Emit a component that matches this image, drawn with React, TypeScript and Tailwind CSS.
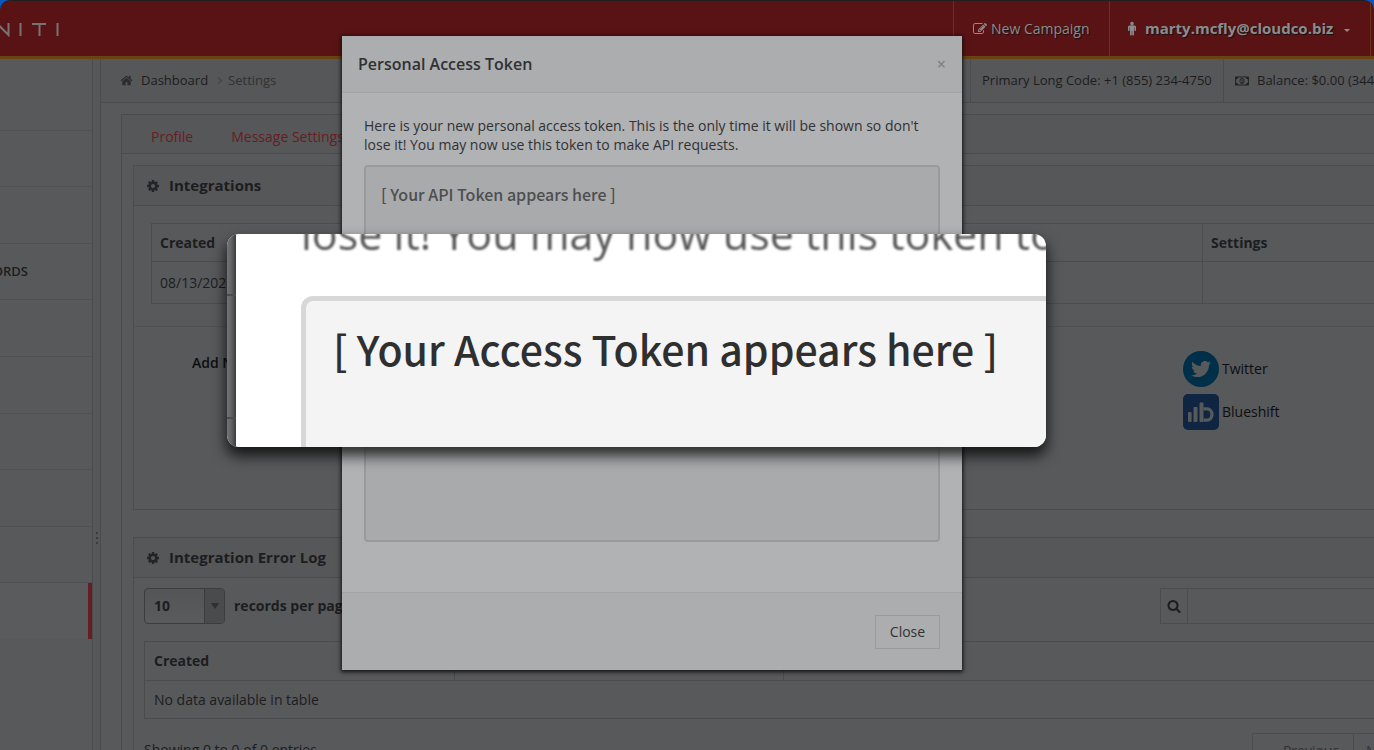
import type { ReactNode } from 'react';
import { FaTwitter } from 'react-icons/fa';

interface IconProps {
  d: string;
  viewBox?: string;
  className?: string;
}

const ICONS = {
  cog: 'M1152 896q0-106-75-181t-181-75-181 75-75 181 75 181 181 75 181-75 75-181zm512-109v222q0 12-8 23t-20 13l-185 28q-19 54-39 91 35 50 107 138 10 12 10 25t-9 23q-27 37-99 108t-94 71q-12 0-26-9l-138-108q-44 23-91 38-16 136-29 186-7 28-36 28h-222q-14 0-24.5-8.5t-11.5-21.5l-28-184q-49-16-90-37l-141 107q-10 9-25 9-14 0-25-11-126-114-165-168-7-10-7-23 0-12 8-23 15-21 51-66.5t54-70.5q-27-50-41-99l-183-27q-13-2-21-12.5t-8-23.5v-222q0-12 8-23t19-13l186-28q14-46 39-92-40-57-107-138-10-12-10-24 0-10 9-23 26-36 98.5-107.5t94.5-71.5q13 0 26 10l138 107q44-23 91-38 16-136 29-186 7-28 36-28h222q14 0 24.5 8.5t11.5 21.5l28 184q49 16 90 37l142-107q9-9 24-9 13 0 25 10 129 119 165 170 7 8 7 22 0 12-8 23-15 21-51 66.5t-54 70.5q26 50 41 98l183 28q13 2 21 12.5t8 23.5z',
  home: 'M1472 992v480q0 26-19 45t-45 19h-384v-384h-256v384h-384q-26 0-45-19t-19-45v-480q0-1 .5-3t.5-3l575-474 575 474q1 2 1 6zm223-69l-62 74q-8 9-21 11h-3q-13 0-21-7l-692-577-692 577q-12 8-24 7-13-2-21-11l-62-74q-8-10-7-23.5t11-21.5l719-599q32-26 76-26t76 26l244 204v-195q0-14 9-23t23-9h192q14 0 23 9t9 23v408l219 182q10 8 11 21.5t-7 23.5z',
  male: 'M1280 704v416q0 40-28 68t-68 28-68-28-28-68v-352h-64v912q0 46-33 79t-79 33-79-33-33-79v-464h-64v464q0 46-33 79t-79 33-79-33-33-79v-912h-64v352q0 40-28 68t-68 28-68-28-28-68v-416q0-80 56-136t136-56h640q80 0 136 56t56 136zm-288-448q0 93-65.5 158.5t-158.5 65.5-158.5-65.5-65.5-158.5 65.5-158.5 158.5-65.5 158.5 65.5 65.5 158.5z',
  edit: 'M888 1184l116-116-152-152-116 116v56h96v96h56zm440-720q-16-16-33 1l-350 350q-17 17-1 33t33-1l350-350q17-17 1-33zm80 594v190q0 119-84.5 203.5t-203.5 84.5h-832q-119 0-203.5-84.5t-84.5-203.5v-832q0-119 84.5-203.5t203.5-84.5h832q63 0 117 25 15 7 18 23 3 17-9 29l-49 49q-14 14-32 8-23-6-45-6h-832q-66 0-113 47t-47 113v832q0 66 47 113t113 47h832q66 0 113-47t47-113v-126q0-13 9-22l64-64q15-15 35-7t20 29zm-96-738l288 288-672 672h-288v-288zm444 132l-92 92-288-288 92-92q28-28 68-28t68 28l152 152q28 28 28 68t-28 68z',
  search: 'M1216 832q0-185-131.5-316.5t-316.5-131.5-316.5 131.5-131.5 316.5 131.5 316.5 316.5 131.5 316.5-131.5 131.5-316.5zm512 832q0 52-38 90t-90 38q-54 0-90-38l-343-342q-179 124-399 124-143 0-273.5-55.5t-225-150-150-225-55.5-273.5 55.5-273.5 150-225 225-150 273.5-55.5 273.5 55.5 225 150 150 225 55.5 273.5q0 220-124 399l343 343q37 37 37 90z',
};

function Icon({ d, viewBox = '0 0 1792 1792', className }: IconProps) {
  return (
    <svg viewBox={viewBox} fill="currentColor" aria-hidden="true" className={className}>
      <path d={d} />
    </svg>
  );
}

function MoneyIcon() {
  return (
    <svg viewBox="0 0 15 10" aria-hidden="true" className="h-[10px] w-[14px]" fill="none" stroke="currentColor">
      <rect x="0.7" y="0.7" width="13.6" height="8.6" strokeWidth="1" />
      <path d="M1 3.2A2.3 2.3 0 0 0 3.3 1H1zM14 3.2A2.3 2.3 0 0 1 11.7 1H14zM1 6.8A2.3 2.3 0 0 1 3.3 9H1zM14 6.8A2.3 2.3 0 0 0 11.7 9H14z" fill="currentColor" stroke="none" />
      <ellipse cx="7.5" cy="5" rx="2.3" ry="2.8" strokeWidth="0.9" />
      <path d="M6.8 4.1l.9-.6v2.9M6.7 6.5h1.9" strokeWidth="0.7" />
    </svg>
  );
}

function BlueshiftIcon() {
  return (
    <svg viewBox="0 0 36 36" aria-hidden="true" className="size-9">
      <rect width="36" height="36" rx="5" fill="#0f2541" />
      <g fill="#58595b">
        <rect x="5" y="18" width="3.6" height="10" rx="1" />
        <rect x="10.5" y="13" width="4" height="15" rx="1" />
        <rect x="16.5" y="8.5" width="4" height="19.5" rx="1" />
      </g>
      <path d="M20.5 14.8h3.500a5 5.700 0 0 1 0 11.400h-3.500" fill="none" stroke="#58595b" strokeWidth="3.3" />
    </svg>
  );
}

function Header() {
  return (
    <header className="flex h-[59px] shrink-0 items-stretch justify-between rounded-t-[10px] border-t border-b-[3px] border-t-[#231f20] border-b-[#6a4313] bg-[#5a1315] text-[#8b8c8e]">
      <a href="#" aria-label="NITI" className="flex items-center">
        <svg viewBox="0 0 62 16" className="h-4 w-[62px]" fill="none" stroke="#777375" strokeWidth="2">
          <path d="M-3 2.500L8.500 14V2M20.500 2v13M32 3h14M39.500 3v12M57.500 2v13" />
        </svg>
      </a>
      <nav className="flex w-[421px] shrink-0 [text-shadow:1px_1px_1px_#111]">
        <a href="#" className="flex w-[156px] items-center gap-1 border-l border-[#6a3414] pl-[19px] text-sm">
          <Icon d={ICONS.edit} className="size-[14px]" />
          New Campaign
        </a>
        <a href="#" className="flex w-[261px] items-center border-l border-[#6a3414] pl-4 text-[15px] font-bold whitespace-nowrap">
          <Icon d={ICONS.male} viewBox="0 0 1536 1792" className="h-[15px] w-[12px]" />
          <span className="ml-[7px]">marty.mcfly@cloudco.biz</span>
          <span className="mt-1 ml-[11px] border-x-[3px] border-t-[3px] border-x-transparent border-t-[#8b8c8e]" />
        </a>
        <div className="flex-1 border-l border-[#6a3414]" />
      </nav>
    </header>
  );
}

const SIDEBAR_ITEMS = ['', '', '', 'CALL RECORDS', '', '', '', '', ''];

function Sidebar() {
  return (
    <aside className="flex w-[92px] shrink-0 flex-col overflow-hidden">
      <div className="h-[15px]" />
      <ul className="flex h-[565px] flex-col">
        {SIDEBAR_ITEMS.map((label, i) => (
          <li
            key={i}
            className="flex flex-1 items-center justify-end border-b border-[#505153] pr-16 text-[13px] font-semibold whitespace-nowrap text-[#1c1d1f]"
          >
            {label && <a href="#">{label}</a>}
          </li>
        ))}
        <li className="flex-1 border-r-4 border-[#651f24] bg-[#5a5b5d]" />
      </ul>
    </aside>
  );
}

function Breadcrumbs() {
  return (
    <div className="flex h-11 shrink-0 items-stretch justify-between border-b border-[#4b4c4e] bg-[#565759] text-[13px]">
      <nav aria-label="Breadcrumb" className="flex items-center pl-[19px]">
        <Icon d={ICONS.home} className="size-[13px] text-[#2b2c2e]" />
        <a href="#" className="ml-2 text-[#1c1d1f]">Dashboard</a>
        <span className="mr-[7px] ml-2 size-[5px] rotate-45 border-t border-r border-[#414244]" />
        <span className="text-[#303133]">Settings</span>
      </nav>
      <div className="flex w-[404px] shrink-0 overflow-hidden whitespace-nowrap text-[#1c1d1f]">
        <div className="flex w-[253px] shrink-0 items-center border-l border-[#4b4c4e] pl-[11px]">
          Primary Long Code: +1 (855) 234-4750
        </div>
        <div className="flex shrink-0 items-center gap-2 border-l border-[#4b4c4e] pl-[11px]">
          <MoneyIcon />
          Balance: $0.00 (344 credits)
        </div>
      </div>
    </div>
  );
}

function Panel({ title, className = '', children }: { title: string; className?: string; children: ReactNode }) {
  return (
    <section className={`-mr-3 border border-[#4b4c4e] ${className}`}>
      <h2 className="flex h-10 items-center gap-[9px] border-b border-[#4b4c4e] bg-[#565759] pl-3 text-[15px] font-bold text-[#1c1d1f]">
        <Icon d={ICONS.cog} className="size-[14px] text-[#232426]" />
        {title}
      </h2>
      {children}
    </section>
  );
}

function Integrations() {
  return (
    <Panel title="Integrations">
      <div className="pt-[17px] pb-[22px] pl-[17px]">
        <table className="w-full border-collapse text-left text-sm text-[#1c1d1f] [&_td]:border [&_td]:border-[#4b4c4e] [&_td]:px-2 [&_th]:border [&_th]:border-[#4b4c4e] [&_th]:px-2">
          <thead>
            <tr className="h-[38px]">
              <th>Created</th>
              <th className="w-[182px]">Settings</th>
            </tr>
          </thead>
          <tbody>
            <tr className="h-[42px]">
              <td>08/13/2020</td>
              <td />
            </tr>
          </tbody>
        </table>
      </div>
      <div className="flex h-[183px] justify-between border-t border-[#505153] pt-6 pl-[58px] text-sm text-[#0d0e10]">
        <h3 className="mt-[2px] font-semibold">Add New:</h3>
        <div className="flex w-[202px] flex-col gap-[7px]">
          <a href="#" className="flex items-center gap-[3px]">
            <span className="flex size-9 items-center justify-center rounded-full bg-[#002f49]">
              <FaTwitter className="size-5 text-[#58595b]" />
            </span>
            Twitter
          </a>
          <a href="#" className="flex items-center gap-[3px]">
            <BlueshiftIcon />
            Blueshift
          </a>
        </div>
      </div>
    </Panel>
  );
}

function ErrorLog() {
  return (
    <Panel title="Integration Error Log" className="mt-[27px]">
      <div className="pt-[10px] pl-[10px] text-sm text-[#1c1d1f]">
        <div className="flex items-center justify-between">
          <label className="flex items-center gap-[9px] font-bold">
            <span className="relative">
              <select
                defaultValue="10"
                className="h-9 w-[81px] appearance-none rounded border border-[#3c3d3f] bg-linear-to-b from-[#545557] to-[#5a5b5d] pl-[9px] font-bold"
              >
                <option>10</option>
                <option>25</option>
                <option>50</option>
              </select>
              <span className="pointer-events-none absolute inset-y-px right-px flex w-5 items-center justify-center rounded-r-[3px] border-l border-[#3c3d3f] bg-[#4a4b4d]">
                <span className="border-x-[4px] border-t-[6px] border-x-transparent border-t-[#2f3032]" />
              </span>
            </span>
            records per page
          </label>
          <div className="flex h-9 w-[225px] border border-[#4b4c4e]">
            <label htmlFor="log-search" aria-label="Search" className="flex w-[27px] items-center justify-center border-r border-[#4b4c4e]">
              <Icon d={ICONS.search} className="size-[14px]" />
            </label>
            <input id="log-search" type="text" className="min-w-0 flex-1 px-2 outline-none" />
          </div>
        </div>
        <table className="mt-[17px] w-full table-fixed border-collapse text-left [&_td]:border [&_td]:border-[#4b4c4e] [&_td]:px-[9px] [&_th]:border [&_th]:border-[#4b4c4e] [&_th]:px-[9px]">
          <thead>
            <tr className="h-[39px]">
              <th className="w-[310px]">Created</th>
              <th className="w-[329px]" />
              <th />
            </tr>
          </thead>
          <tbody>
            <tr className="h-[38px]">
              <td colSpan={3}>No data available in table</td>
            </tr>
          </tbody>
        </table>
        <div className="mt-[14px] flex items-start justify-between">
          <p className="mt-[7px]">Showing 0 to 0 of 0 entries</p>
          <div className="flex h-9 w-[133px] border border-[#4b4c4e] text-[#303133]">
            <button type="button" className="w-[101px] shrink-0 border-r border-[#4b4c4e] pl-4">Previous</button>
            <button type="button" className="pl-3">Next</button>
          </div>
        </div>
      </div>
    </Panel>
  );
}

function TokenDialog() {
  return (
    <div className="absolute inset-0 flex items-start justify-center pt-9 pr-[70px]">
      <div
        role="dialog"
        aria-labelledby="token-title"
        className="w-[620px] bg-[#b1b2b4] text-[#303133] shadow-[0_1px_4px_1px_#111]"
      >
        <div className="flex h-[57px] items-center justify-between border-b border-[#a3a4a6] bg-[#acadaf] px-4">
          <h1 id="token-title" className="text-base font-semibold">Personal Access Token</h1>
          <button type="button" aria-label="Close dialog" className="text-base font-semibold text-[#828385]">×</button>
        </div>
        <div className="px-[22px] pt-[23px] pb-[50px]">
          <p className="text-sm leading-[19px]">
            Here is your new personal access token. This is the only time it will be shown so don't lose it! You may now use this token to make API requests.
          </p>
          <div className="mt-[11px] h-[377px] rounded border-2 border-[#999a9c] bg-[#a9aaac] px-[15px] pt-[15px] font-['Noto_Sans_CJK_SC',sans-serif] text-base leading-6 font-medium text-[#4d4e50]">
            [ Your API Token appears here ]
          </div>
        </div>
        <div className="flex h-[78px] items-center justify-end border-t border-[#a3a4a6] bg-[#acadaf] px-[22px]">
          <button type="button" className="h-[34px] w-[65px] border border-[#999a9c] text-sm">Close</button>
        </div>
      </div>
    </div>
  );
}

// Enlarged view of the token box, floating above the dialog
function TokenCallout() {
  return (
    <div className="absolute inset-0 flex items-start justify-center pt-[234px] pr-[101px]">
      <div className="flex h-[213px] w-[819px] overflow-hidden rounded-xl bg-white shadow-[0_8px_14px_1px_rgba(0,0,0,0.75)]">
        <div className="flex w-[9px] shrink-0 flex-col bg-linear-to-r from-[#737475] via-[#606162] to-[#3c3c3d]">
          <div className="h-[62px] border-b-2 border-[#4b4c4e]" />
          <div className="h-[123px] border-b-2 border-[#4b4c4e]" />
        </div>
        <div className="flex min-w-0 flex-1 flex-col pl-[65px]">
          <div className="h-[62px] shrink-0">
            <p className="-mt-[23px] text-[43px] leading-[45px] font-medium whitespace-nowrap text-[#555] blur-[1px]">
              lose it! You may now use this token to
            </p>
          </div>
          <div className="h-[151px] shrink-0 rounded-tl-xl border-t-[5px] border-l-[5px] border-[#d7d7d7] bg-[#f4f4f4] pt-4 pl-[27px] font-['Noto_Sans_CJK_SC',sans-serif] text-[41px] leading-[62px] font-medium whitespace-nowrap text-[#2f2f2f]">
            [ Your Access Token appears here ]
          </div>
        </div>
      </div>
    </div>
  );
}

export default function App() {
  return (
    <div className="relative flex h-screen flex-col overflow-hidden bg-[#0a57c2] font-['Open_Sans',sans-serif]">
      <Header />
      <div className="flex min-h-0 flex-1 bg-[#58595b]">
        <Sidebar />
        <div className="flex w-[9px] shrink-0 flex-col items-center border-x border-[#4b4c4e] bg-[#565759] pt-[473px]">
          <div className="flex flex-col gap-[3px]">
            <span className="size-[2px] bg-[#3a3b3d]" />
            <span className="size-[2px] bg-[#3a3b3d]" />
            <span className="size-[2px] bg-[#3a3b3d]" />
          </div>
        </div>
        <main className="flex min-w-0 flex-1 flex-col overflow-hidden">
          <Breadcrumbs />
          <div className="pt-[11px] pl-5">
            <div className="border-t border-l border-[#4b4c4e]">
              <nav className="flex h-[39px] items-center gap-[38px] border-b border-[#4b4c4e] bg-[#565759] pt-[6px] pl-[29px] text-sm text-[#691c22]">
                <a href="#">Profile</a>
                <a href="#">Message Settings</a>
              </nav>
              <div className="pt-[11px] pl-[11px]">
                <Integrations />
                <ErrorLog />
              </div>
            </div>
          </div>
        </main>
      </div>
      <TokenDialog />
      <TokenCallout />
    </div>
  );
}
